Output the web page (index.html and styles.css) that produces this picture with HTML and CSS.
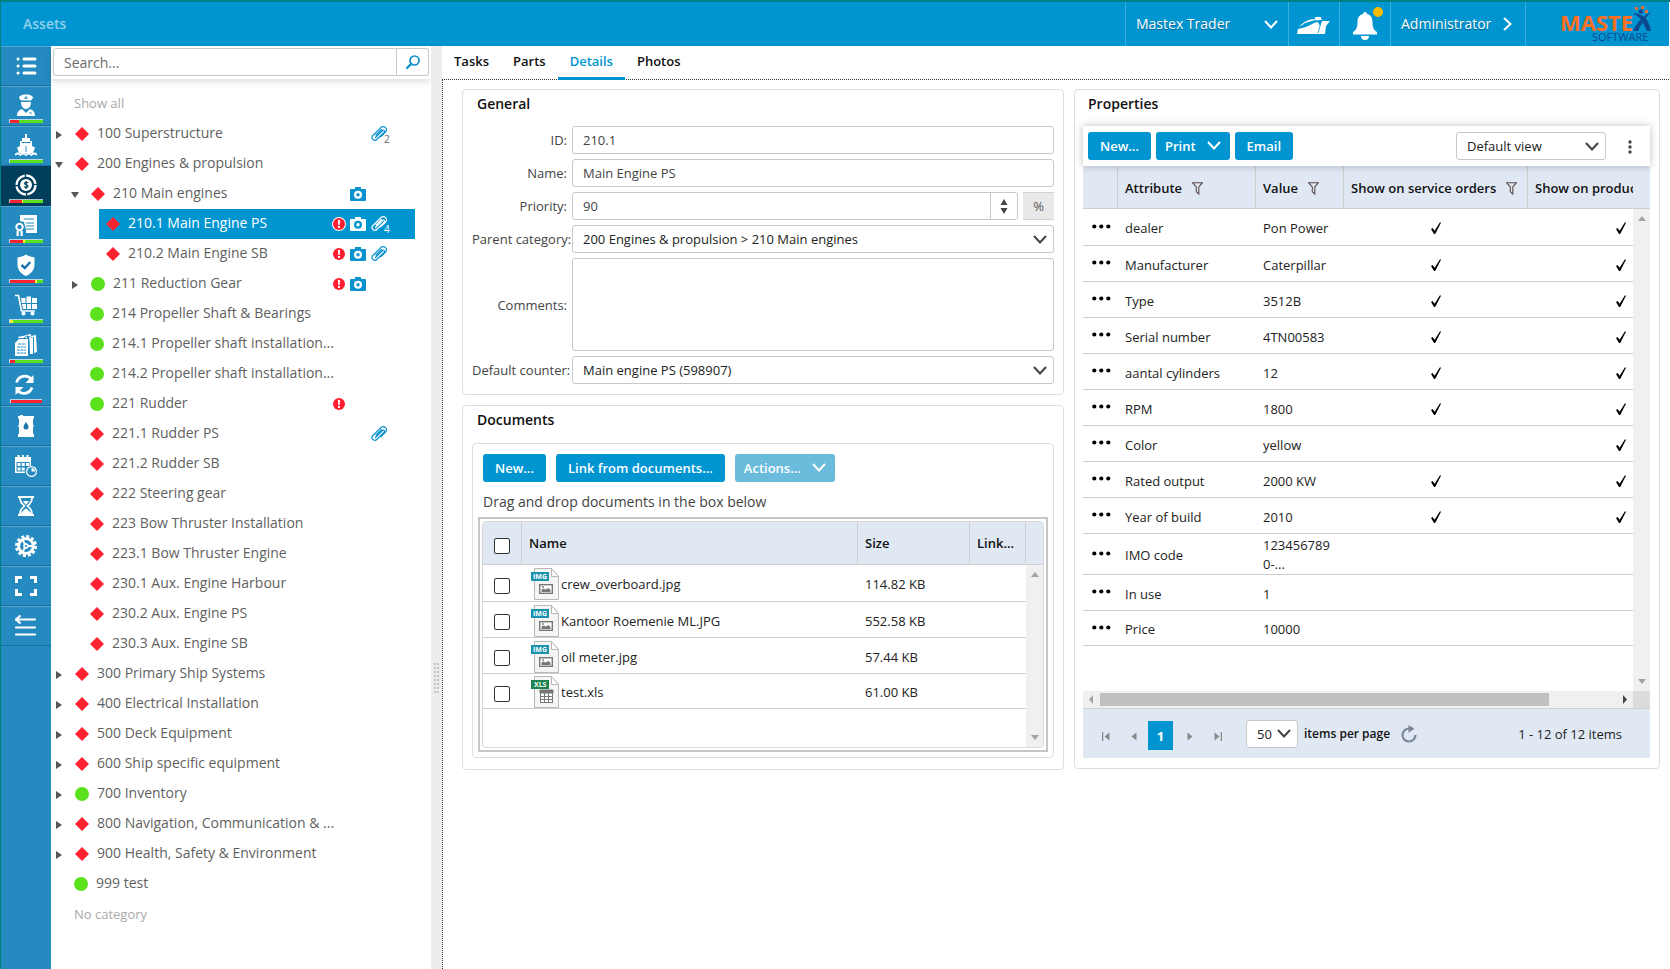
FILE: index.html
```html
<!DOCTYPE html>
<html lang="en">
<head>
<meta charset="utf-8">
<title>Assets</title>
<link rel="stylesheet" href="styles.css">
</head>
<body>
<svg class="defs" width="0" height="0" aria-hidden="true">
  <symbol id="diamond" viewBox="0 0 14 14"><path d="M7 0l7 7-7 7-7-7z" fill="#ff2231"/></symbol>
  <symbol id="dot" viewBox="0 0 14 14"><circle cx="7" cy="7" r="7" fill="#5be11c"/></symbol>
  <symbol id="closed" viewBox="0 0 8 8"><path d="M1 0l6 4-6 4z" fill="currentColor"/></symbol>
  <symbol id="open" viewBox="0 0 8 8"><path d="M0 1h8L4 7z" fill="currentColor"/></symbol>
  <symbol id="alert" viewBox="0 0 14 14"><circle cx="7" cy="7" r="6" fill="#ff1f32"/><path d="M5.900 3h2.200l-.4 5H6.300zM6 9h2v2H6z" fill="#fff"/></symbol>
  <symbol id="camera" viewBox="0 0 16 14"><path fill-rule="evenodd" d="M5 0h6v2h4a1 1 0 0 1 1 1v10a1 1 0 0 1-1 1H1a1 1 0 0 1-1-1V3a1 1 0 0 1 1-1h4zM8 3.700a4 4 0 1 0 0 8 4 4 0 0 0 0-8zm0 2.300a1.700 1.700 0 1 1 0 3.400A1.700 1.700 0 0 1 8 6z" fill="currentColor"/></symbol>
  <symbol id="clip" viewBox="0 0 16 16"><path d="M4.500 11.500l7-7a1.200 1.200 0 0 1 1.700 1.700L5.800 13.500a2.700 2.700 0 0 1-4-.2 2.700 2.700 0 0 1 .1-3.800L9.800 1.600a3.200 3.200 0 0 1 4.700.1 3.200 3.200 0 0 1 0 4.500L10 10.700M5 9l5.500-5.500" fill="none" stroke="currentColor" stroke-width="1.200" stroke-linecap="round"/></symbol>
  <symbol id="chev" viewBox="0 0 14 9"><path d="M1 1l6 6.500L13 1" fill="none" stroke="currentColor" stroke-width="2"/></symbol>
  <symbol id="filter" viewBox="0 0 11 13"><path d="M.5.700h10L6.800 5v7L4.300 9.800V5z" fill="none" stroke="#5b4a4a" stroke-width="1.100"/></symbol>
  <symbol id="more" viewBox="0 0 19 5"><g fill="#000"><circle cx="2.300" cy="2.500" r="2.100"/><circle cx="9.300" cy="2.500" r="2.100"/><circle cx="16.300" cy="2.500" r="2.100"/></g></symbol>
  <symbol id="tick" viewBox="0 0 10 12"><path d="M0 7l1.600-1 2 2.800L9 .3l1 .5L4.200 12H3z" fill="#000"/></symbol>
  <symbol id="img" viewBox="0 0 28 32"><path d="M3.500.500h17l7 8v23h-24z" fill="#f5f5f5" stroke="#b8b8b8"/><path d="M20.500.500v8h7z" fill="#fff" stroke="#b8b8b8"/><rect y="4" width="18" height="9" fill="#1b93ae"/><rect x="8.700" y="16.700" width="12.600" height="8.600" fill="#fff" stroke="#777" stroke-width="1.400"/><path d="M10.500 24v-2.500l2-1 2 1 3-1.500 2 2v2z" fill="#777"/><circle cx="12" cy="19" r=".9" fill="#777"/></symbol>
  <symbol id="xls" viewBox="0 0 28 32"><path d="M3.500.500h17l7 8v23h-24z" fill="#f5f5f5" stroke="#b8b8b8"/><path d="M20.500.500v8h7z" fill="#fff" stroke="#b8b8b8"/><rect y="4" width="18" height="9" fill="#1f8350"/><rect x="9.500" y="14.500" width="12" height="12" fill="#fff" stroke="#777"/><path d="M9 14h13v3H9zM13.500 16v11M17.500 16v11M9 20.500h13M9 23.500h13" fill="#777" stroke="#777"/></symbol>
</svg>

<div class="app">
<header class="topbar">
  <h1 class="page-title">Assets</h1>
  <button class="top-item vessel" type="button"><span>Mastex Trader</span><svg width="14" height="9"><use href="#chev"/></svg></button>
  <button class="top-item ship" type="button" aria-label="Vessel">
    <svg width="34" height="17" viewBox="0 0 34 17"><path d="M0 17l1-5c6-1 11-3 16-6l4-1 2 4 2-5h8l-4 5-1 8z" fill="#fff"/><path d="M2 10c4-5 10-8 16-8V0h6v2l2 1c-9 0-17 2-24 7z" fill="#fff"/><path d="M7 7l12-4M24.500 3L23 9l-2 7" fill="none" stroke="#0095d0" stroke-width=".8"/></svg>
  </button>
  <button class="top-item bell" type="button" aria-label="Notifications">
    <svg width="24" height="28" viewBox="0 0 24 28"><path d="M12 0a2 2 0 0 1 2 2c4 1 5.500 4 5.500 8 0 5 1 8 4.500 10v2.500H0V20c3.500-2 4.500-5 4.500-10C4.500 6 6 3 10 2a2 2 0 0 1 2-2z" fill="#fff"/><path d="M8 24h8a4 4 0 0 1-8 0z" fill="#fff"/></svg>
    <i class="badge"></i>
  </button>
  <button class="top-item user" type="button"><span>Administrator</span><svg width="9" height="14" viewBox="0 0 9 14"><path d="M1 1l6.500 6L1 13" fill="none" stroke="#fff" stroke-width="2"/></svg></button>
  <a class="top-item brand" href="#" aria-label="Mastex Software">
    <svg width="92" height="38" viewBox="0 0 92 38"><text x="0" y="26" class="brand-a">MASTE</text><text x="32" y="36" class="brand-b">SOFTWARE</text><path d="M73 9c6 1 10 8 14 17h4c-2-9-4-13-10-16-2-1-5-2-8-1z" fill="#0b4a8f"/><path d="M91 7c-7 3-14 10-18 19h5c3-7 7-13 13-19z" fill="#0b4a8f"/><circle cx="81" cy="6.500" r="2.300" fill="#0b4a8f"/><g fill="#ff6f21"><rect x="75" y="2" width="3" height="3" rx="1"/><rect x="81" y="1" width="3" height="3" rx="1"/><rect x="85" y="5" width="3" height="3" rx="1"/></g></svg>
  </a>
</header>

<div class="body">
<nav class="rail" aria-label="Modules">
  <a class="mod plain" href="#" aria-label="List"><svg viewBox="0 0 22 22"><path d="M9 4h11M9 11h11M9 18h11M3 4h.1M3 11h.1M3 18h.1" stroke="#fff" stroke-width="3" stroke-linecap="round"/></svg></a>
  <a class="mod" href="#" aria-label="Crew"><svg viewBox="0 0 22 22"><path d="M4 4c0-2 3-3.500 7-3.500S18 2 18 4l-2 2.500H6z"/><path d="M6 8h10c0 4-2 7-5 7S6 12 6 8z"/><path d="M2 22c0-4 2-6 5-7l4 4 4-4c3 1 5 3 5 7z"/><path d="M10 3h2v1.500h-2zM14 19h3" stroke="#248abf" stroke-width=".9"/></svg><span class="bar"><i class="r" style="width:28%"></i><i class="g" style="width:72%"></i></span></a>
  <a class="mod" href="#" aria-label="Ship"><svg viewBox="0 0 22 22"><path d="M10 0h2v4h3v3h2v5l3 1.500-2 5.500H4L2 13.500 5 12V7h2V4h3z"/><path d="M6.500 8.500h9M11 12v6" stroke="#248abf"/><path d="M0 21q2.700-3 5.500 0 2.700-3 5.500 0 2.700-3 5.500 0 2.700-3 5.500 0" fill="none" stroke="#fff" stroke-width="1.800"/></svg><span class="bar"><i class="g" style="width:100%"></i></span></a>
  <a class="mod current" href="#" aria-label="Assets" aria-current="page"><svg viewBox="0 0 22 22"><circle cx="11" cy="11" r="9.500" fill="none" stroke="#fff" stroke-width="2.400" stroke-dasharray="13.400 1.500"/><circle cx="11" cy="11" r="6"/><path d="M13 9c-.5-1-3.500-1.200-3.500.5 0 1.500 3.500 1 3.500 2.700 0 1.600-3 1.600-4 .3M11.200 7v8" fill="none" stroke="#003e5b" stroke-width="1.200"/></svg><span class="bar"><i class="r" style="width:37%"></i><i class="y" style="width:3%"></i><i class="g" style="width:60%"></i></span></a>
  <a class="mod" href="#" aria-label="Certificates"><svg viewBox="0 0 22 22"><path d="M5 1h17v18H11v-3l-2-8-4-1z"/><path d="M9 5h10M11 9h8M11 12h8M11 15h8" stroke="#248abf" stroke-width="1.100"/><circle cx="4.500" cy="13" r="3.200" fill="#248abf" stroke="#fff" stroke-width="2"/><path d="M1.500 17h2.300v5H1.500zM5.500 17h2.300v5H5.500z"/></svg><span class="bar"><i class="r" style="width:40%"></i><i class="y" style="width:6%"></i><i class="g" style="width:54%"></i></span></a>
  <a class="mod" href="#" aria-label="Safety"><svg viewBox="0 0 22 22"><path d="M11 .5c3 2 5.500 2.500 8.500 3V11c0 5-4 9-8.500 11C6.500 20 2.500 16 2.500 11V3.500c3-.5 5.500-1 8.500-3z"/><path d="M6.500 11l3.300 3 5.500-6" fill="none" stroke="#1c73ad" stroke-width="2.400"/></svg><span class="bar"><i class="r" style="width:77%"></i><i class="y" style="width:6%"></i><i class="g" style="width:17%"></i></span></a>
  <a class="mod" href="#" aria-label="Purchasing"><svg viewBox="0 0 22 22"><path d="M0 1.500h3.500l3 15.500H20" fill="none" stroke="#fff" stroke-width="1.600"/><path d="M6 4h4.500v5H6.800zM11.500 2.500H16V9h-4.500zM17 4h5v5h-5zM7 10h4v5H8zM12 10h4v5h-4zM17 10h5v5h-5z"/><circle cx="8.500" cy="19.500" r="2"/><circle cx="17.500" cy="19.500" r="2"/></svg><span class="bar"><i class="y" style="width:10%"></i><i class="g" style="width:90%"></i></span></a>
  <a class="mod" href="#" aria-label="Documents"><svg viewBox="0 0 22 22"><path d="M3 3l9-2v3H3zM11 1l5-1v2l5-1 1 17-3 1V4zM14 3l4 1v16h-3z"/><path d="M4 5h9v17H0V9z"/><path d="M3 10h8M2 13h9M2 16h9M2 19h9" stroke="#248abf" stroke-dasharray="3 .6"/><path d="M14 5v16M18.500 3v16M9 4l3-2 2 2" fill="none" stroke="#248abf" stroke-width=".9"/></svg><span class="bar"><i class="r" style="width:16%"></i><i class="g" style="width:84%"></i></span></a>
  <a class="mod" href="#" aria-label="Synchronise"><svg viewBox="0 0 22 22"><path d="M1.500 8.500A8.500 8.500 0 0 1 16 5M17 13.500A8.500 8.500 0 0 1 3 17" fill="none" stroke="#fff" stroke-width="2.800"/><path d="M18.500 1v8h-8zM.5 21v-8h8z"/></svg><span class="bar short"><i class="r" style="width:100%"></i></span></a>
  <a class="mod plain" href="#" aria-label="Oil"><svg viewBox="0 0 22 22"><path d="M3 1h2V0h3v1h11v2.500h-1V10h.7v2H18v7h1v3H3v-3h1v-7h-.7v-2H4V3.500H3z"/><path d="M11 7c2 3 2.500 4 2.500 5a2.500 2.500 0 0 1-5 0c0-1 .5-2 2.500-5z" fill="#1c73ad"/></svg></a>
  <a class="mod plain" href="#" aria-label="Planning"><svg viewBox="0 0 22 22"><path fill-rule="evenodd" d="M0 2h16v9h-1.500V7h-13v9.500H10V18H0z"/><path d="M2.500 0h2v4h-2zM7 0h2v4H7zM11.500 0h2v4h-2zM2.500 8h3v3h-3zM6.700 8h3v3h-3zM11 8h3v3h-3zM2.500 12.500h3v3h-3zM6.700 12.500h3v3h-3z"/><circle cx="16.500" cy="16.500" r="4.900" fill="#248abf" stroke="#fff" stroke-width="1.200"/><path d="M16.500 13v3.500H20A3.500 3.500 0 0 0 16.500 13z"/></svg></a>
  <a class="mod plain" href="#" aria-label="Hours"><svg viewBox="0 0 22 22"><path d="M3 1h16v2H3zM3 19h16v2H3z"/><path d="M5 3c0 5 2 5.500 4.500 8C7 13.500 5 14 5 19M17 3c0 5-2 5.500-4.500 8 2.500 2.500 4.500 3 4.500 8" fill="none" stroke="#fff" stroke-width="1.700"/><path d="M8 6h6l-3 4zM6 19c0-3 3-3 5-6 2 3 5 3 5 6z"/></svg></a>
  <a class="mod plain" href="#" aria-label="Settings"><svg viewBox="0 0 22 22"><circle cx="11" cy="11" r="9.500" fill="none" stroke="#fff" stroke-width="3" stroke-dasharray="3 1.970"/><circle cx="11" cy="11" r="7.300" fill="none" stroke="#fff" stroke-width="2.800"/><path d="M11 11h7M11 11L7.500 5M11 11l-3.500 6" stroke="#fff" stroke-width="2"/><circle cx="11" cy="11" r="2.800"/><circle cx="11" cy="11" r="1.100" fill="#248abf"/></svg></a>
  <a class="mod plain" href="#" aria-label="Full screen"><svg viewBox="0 0 22 22"><path d="M1.500 8V2.500H7M15 2.500h5.500V8M20.500 14v5.500H15M7 19.500H1.500V14" fill="none" stroke="#fff" stroke-width="3"/></svg></a>
  <a class="mod plain" href="#" aria-label="Collapse"><svg viewBox="0 0 22 22"><path d="M1 4.500h19M1 12.500h19M1 19.500h19" stroke="#fff" stroke-width="2.200" stroke-linecap="round"/><path d="M5.500.5L1 4.500l4.500 4" fill="none" stroke="#fff" stroke-width="2.200"/></svg></a>
</nav>

<aside class="tree-pane">
  <form class="search" role="search">
    <input type="text" placeholder="Search..." aria-label="Search">
    <button type="button" aria-label="Find"><svg width="14" height="14" viewBox="0 0 14 14"><circle cx="8.500" cy="5.500" r="4.500" fill="none" stroke="#0a8fcd" stroke-width="1.700"/><path d="M5.300 8.700L1 13" stroke="#0a8fcd" stroke-width="2.200" stroke-linecap="round"/></svg></button>
  </form>
  <div class="tree">
    <a class="hint" href="#">Show all</a>
    <ul>
      <li class="node"><svg class="tw"><use href="#closed"/></svg><svg class="mk"><use href="#diamond"/></svg><span class="nm">100 Superstructure</span><span class="flags"><b class="cl"><svg width="16" height="16"><use href="#clip"/></svg><sub>2</sub></b></span></li>
      <li class="node"><svg class="tw"><use href="#open"/></svg><svg class="mk"><use href="#diamond"/></svg><span class="nm">200 Engines &amp; propulsion</span></li>
      <li class="node l2"><svg class="tw"><use href="#open"/></svg><svg class="mk"><use href="#diamond"/></svg><span class="nm">210 Main engines</span><span class="flags"><b class="cm"><svg width="16" height="14"><use href="#camera"/></svg></b></span></li>
      <li class="node l3 selected"><svg class="mk"><use href="#diamond"/></svg><span class="nm">210.1 Main Engine PS</span><span class="flags"><b class="al ring"><svg width="14" height="14"><use href="#alert"/></svg></b><b class="cm"><svg width="16" height="14"><use href="#camera"/></svg></b><b class="cl"><svg width="16" height="16"><use href="#clip"/></svg><sub>4</sub></b></span></li>
      <li class="node l3"><svg class="mk"><use href="#diamond"/></svg><span class="nm">210.2 Main Engine SB</span><span class="flags"><b class="al"><svg width="14" height="14"><use href="#alert"/></svg></b><b class="cm"><svg width="16" height="14"><use href="#camera"/></svg></b><b class="cl"><svg width="16" height="16"><use href="#clip"/></svg></b></span></li>
      <li class="node l2"><svg class="tw"><use href="#closed"/></svg><svg class="mk"><use href="#dot"/></svg><span class="nm">211 Reduction Gear</span><span class="flags"><b class="al"><svg width="14" height="14"><use href="#alert"/></svg></b><b class="cm"><svg width="16" height="14"><use href="#camera"/></svg></b></span></li>
      <li class="node leaf"><svg class="mk"><use href="#dot"/></svg><span class="nm">214 Propeller Shaft &amp; Bearings</span></li>
      <li class="node leaf"><svg class="mk"><use href="#dot"/></svg><span class="nm">214.1 Propeller shaft installation...</span></li>
      <li class="node leaf"><svg class="mk"><use href="#dot"/></svg><span class="nm">214.2 Propeller shaft installation...</span></li>
      <li class="node leaf"><svg class="mk"><use href="#dot"/></svg><span class="nm">221 Rudder</span><span class="flags"><b class="al"><svg width="14" height="14"><use href="#alert"/></svg></b></span></li>
      <li class="node leaf"><svg class="mk"><use href="#diamond"/></svg><span class="nm">221.1 Rudder PS</span><span class="flags"><b class="cl"><svg width="16" height="16"><use href="#clip"/></svg></b></span></li>
      <li class="node leaf"><svg class="mk"><use href="#diamond"/></svg><span class="nm">221.2 Rudder SB</span></li>
      <li class="node leaf"><svg class="mk"><use href="#diamond"/></svg><span class="nm">222 Steering gear</span></li>
      <li class="node leaf"><svg class="mk"><use href="#diamond"/></svg><span class="nm">223 Bow Thruster Installation</span></li>
      <li class="node leaf"><svg class="mk"><use href="#diamond"/></svg><span class="nm">223.1 Bow Thruster Engine</span></li>
      <li class="node leaf"><svg class="mk"><use href="#diamond"/></svg><span class="nm">230.1 Aux. Engine Harbour</span></li>
      <li class="node leaf"><svg class="mk"><use href="#diamond"/></svg><span class="nm">230.2 Aux. Engine PS</span></li>
      <li class="node leaf"><svg class="mk"><use href="#diamond"/></svg><span class="nm">230.3 Aux. Engine SB</span></li>
      <li class="node"><svg class="tw"><use href="#closed"/></svg><svg class="mk"><use href="#diamond"/></svg><span class="nm">300 Primary Ship Systems</span></li>
      <li class="node"><svg class="tw"><use href="#closed"/></svg><svg class="mk"><use href="#diamond"/></svg><span class="nm">400 Electrical Installation</span></li>
      <li class="node"><svg class="tw"><use href="#closed"/></svg><svg class="mk"><use href="#diamond"/></svg><span class="nm">500 Deck Equipment</span></li>
      <li class="node"><svg class="tw"><use href="#closed"/></svg><svg class="mk"><use href="#diamond"/></svg><span class="nm">600 Ship specific equipment</span></li>
      <li class="node"><svg class="tw"><use href="#closed"/></svg><svg class="mk"><use href="#dot"/></svg><span class="nm">700 Inventory</span></li>
      <li class="node"><svg class="tw"><use href="#closed"/></svg><svg class="mk"><use href="#diamond"/></svg><span class="nm">800 Navigation, Communication &amp; ...</span></li>
      <li class="node"><svg class="tw"><use href="#closed"/></svg><svg class="mk"><use href="#diamond"/></svg><span class="nm">900 Health, Safety &amp; Environment</span></li>
      <li class="node root-leaf"><svg class="mk"><use href="#dot"/></svg><span class="nm">999 test</span></li>
    </ul>
    <a class="hint" href="#">No category</a>
  </div>
</aside>

<div class="splitter"><i class="grip"></i></div>

<main class="content">
  <nav class="tabs"><a href="#">Tasks</a><a href="#">Parts</a><a class="active" href="#" aria-current="page">Details</a><a href="#">Photos</a></nav>
  <div class="panels">
    <div class="column">
      <section class="card">
        <h2>General</h2>
        <form class="form">
          <label for="f-id">ID:</label><input id="f-id" class="field" type="text" value="210.1">
          <label for="f-name">Name:</label><input id="f-name" class="field" type="text" value="Main Engine PS">
          <label for="f-prio">Priority:</label>
          <div class="prio"><div class="spin"><input id="f-prio" type="number" value="90"><div class="steps"><button type="button" aria-label="Increase"><svg width="8" height="6" viewBox="0 0 8 6"><path d="M4 0l3.500 6h-7z" fill="#444"/></svg></button><button type="button" aria-label="Decrease"><svg width="8" height="6" viewBox="0 0 8 6"><path d="M4 6L.5 0h7z" fill="#444"/></svg></button></div></div><span class="unit">%</span></div>
          <label for="f-parent">Parent category:</label>
          <div class="pick"><select id="f-parent"><option>200 Engines &amp; propulsion &gt; 210 Main engines</option></select><svg width="14" height="9"><use href="#chev"/></svg></div>
          <label for="f-comments">Comments:</label><textarea id="f-comments" class="field area"></textarea>
          <label for="f-counter">Default counter:</label>
          <div class="pick"><select id="f-counter"><option>Main engine PS (598907)</option></select><svg width="14" height="9"><use href="#chev"/></svg></div>
        </form>
      </section>
      <section class="card">
        <h2>Documents</h2>
        <div class="docs">
          <div class="actions"><button class="btn" type="button">New...</button><button class="btn" type="button">Link from documents...</button><button class="btn drop" type="button" disabled>Actions...<svg width="14" height="9"><use href="#chev"/></svg></button></div>
          <p class="note">Drag and drop documents in the box below</p>
          <div class="dropzone">
            <div class="grid">
              <div class="clip">
              <table class="doc-table">
                <colgroup><col class="d-sel"><col><col class="d-size"><col class="d-link"></colgroup>
                <thead><tr><th><input type="checkbox" aria-label="Select all"></th><th>Name</th><th>Size</th><th>Link...</th></tr></thead>
                <tbody>
                  <tr class="first"><td><input type="checkbox" aria-label="Select crew_overboard.jpg"></td><td><span class="file"><svg width="28" height="32"><use href="#img"/><text x="2" y="11" class="tag">IMG</text></svg>crew_overboard.jpg</span></td><td>114.82 KB</td><td></td></tr>
                  <tr><td><input type="checkbox" aria-label="Select Kantoor Roemenie ML.JPG"></td><td><span class="file"><svg width="28" height="32"><use href="#img"/><text x="2" y="11" class="tag">IMG</text></svg>Kantoor Roemenie ML.JPG</span></td><td>552.58 KB</td><td></td></tr>
                  <tr><td><input type="checkbox" aria-label="Select oil meter.jpg"></td><td><span class="file"><svg width="28" height="32"><use href="#img"/><text x="2" y="11" class="tag">IMG</text></svg>oil meter.jpg</span></td><td>57.44 KB</td><td></td></tr>
                  <tr class="last"><td><input type="checkbox" aria-label="Select test.xls"></td><td><span class="file"><svg width="28" height="32"><use href="#xls"/><text x="3" y="11" class="tag">XLS</text></svg>test.xls</span></td><td>61.00 KB</td><td></td></tr>
                </tbody>
              </table>
              </div>
              <div class="vbar"><i class="cap"></i><span class="track"><svg width="8" height="5" viewBox="0 0 8 5"><path d="M4 0l4 5H0z"/></svg><svg width="8" height="5" viewBox="0 0 8 5"><path d="M0 0h8L4 5z"/></svg></span></div>
            </div>
          </div>
        </div>
      </section>
    </div>

    <section class="card props">
      <h2>Properties</h2>
      <div class="prop-grid">
        <div class="toolbar">
          <button class="btn" type="button">New...</button><button class="btn drop" type="button">Print<svg width="14" height="9"><use href="#chev"/></svg></button><button class="btn" type="button">Email</button>
          <div class="pick view"><select aria-label="View"><option>Default view</option></select><svg width="14" height="9"><use href="#chev"/></svg></div>
          <button class="kebab" type="button" aria-label="More"><svg width="4" height="14" viewBox="0 0 4 14"><g fill="#444"><circle cx="2" cy="2" r="1.700"/><circle cx="2" cy="7" r="1.700"/><circle cx="2" cy="12" r="1.700"/></g></svg></button>
        </div>
        <div class="grid">
          <div class="clip">
          <table class="prop-table">
            <colgroup><col class="p-menu"><col class="p-attr"><col class="p-val"><col class="p-so"><col></colgroup>
            <thead><tr><th></th><th>Attribute<svg width="11" height="13"><use href="#filter"/></svg></th><th>Value<svg width="11" height="13"><use href="#filter"/></svg></th><th>Show on service orders<svg width="11" height="13"><use href="#filter"/></svg></th><th>Show on production</th></tr></thead>
            <tbody>
              <tr class="first"><td><button class="dots" type="button" aria-label="Menu"><svg width="19" height="5"><use href="#more"/></svg></button></td><td>dealer</td><td>Pon Power</td><td><svg width="10" height="12"><use href="#tick"/></svg></td><td><svg width="10" height="12"><use href="#tick"/></svg></td></tr>
              <tr><td><button class="dots" type="button" aria-label="Menu"><svg width="19" height="5"><use href="#more"/></svg></button></td><td>Manufacturer</td><td>Caterpillar</td><td><svg width="10" height="12"><use href="#tick"/></svg></td><td><svg width="10" height="12"><use href="#tick"/></svg></td></tr>
              <tr><td><button class="dots" type="button" aria-label="Menu"><svg width="19" height="5"><use href="#more"/></svg></button></td><td>Type</td><td>3512B</td><td><svg width="10" height="12"><use href="#tick"/></svg></td><td><svg width="10" height="12"><use href="#tick"/></svg></td></tr>
              <tr><td><button class="dots" type="button" aria-label="Menu"><svg width="19" height="5"><use href="#more"/></svg></button></td><td>Serial number</td><td>4TN00583</td><td><svg width="10" height="12"><use href="#tick"/></svg></td><td><svg width="10" height="12"><use href="#tick"/></svg></td></tr>
              <tr><td><button class="dots" type="button" aria-label="Menu"><svg width="19" height="5"><use href="#more"/></svg></button></td><td>aantal cylinders</td><td>12</td><td><svg width="10" height="12"><use href="#tick"/></svg></td><td><svg width="10" height="12"><use href="#tick"/></svg></td></tr>
              <tr><td><button class="dots" type="button" aria-label="Menu"><svg width="19" height="5"><use href="#more"/></svg></button></td><td>RPM</td><td>1800</td><td><svg width="10" height="12"><use href="#tick"/></svg></td><td><svg width="10" height="12"><use href="#tick"/></svg></td></tr>
              <tr><td><button class="dots" type="button" aria-label="Menu"><svg width="19" height="5"><use href="#more"/></svg></button></td><td>Color</td><td>yellow</td><td></td><td><svg width="10" height="12"><use href="#tick"/></svg></td></tr>
              <tr><td><button class="dots" type="button" aria-label="Menu"><svg width="19" height="5"><use href="#more"/></svg></button></td><td>Rated output</td><td>2000 KW</td><td><svg width="10" height="12"><use href="#tick"/></svg></td><td><svg width="10" height="12"><use href="#tick"/></svg></td></tr>
              <tr><td><button class="dots" type="button" aria-label="Menu"><svg width="19" height="5"><use href="#more"/></svg></button></td><td>Year of build</td><td>2010</td><td><svg width="10" height="12"><use href="#tick"/></svg></td><td><svg width="10" height="12"><use href="#tick"/></svg></td></tr>
              <tr class="tall"><td><button class="dots" type="button" aria-label="Menu"><svg width="19" height="5"><use href="#more"/></svg></button></td><td>IMO code</td><td>123456789<br>0-...</td><td></td><td></td></tr>
              <tr><td><button class="dots" type="button" aria-label="Menu"><svg width="19" height="5"><use href="#more"/></svg></button></td><td>In use</td><td>1</td><td></td><td></td></tr>
              <tr class="last"><td><button class="dots" type="button" aria-label="Menu"><svg width="19" height="5"><use href="#more"/></svg></button></td><td>Price</td><td>10000</td><td></td><td></td></tr>
            </tbody>
          </table>
          </div>
          <div class="vbar"><i class="cap"></i><span class="track"><svg width="8" height="5" viewBox="0 0 8 5"><path d="M4 0l4 5H0z"/></svg><svg width="8" height="5" viewBox="0 0 8 5"><path d="M0 0h8L4 5z"/></svg></span></div>
        </div>
        <div class="hbar"><svg width="17" height="9" viewBox="0 0 17 9"><path d="M10 0v9L6 4.500z" fill="#a3a3a3"/></svg><span class="lane"><i class="thumb"></i></span><svg width="17" height="9" viewBox="0 0 17 9"><path d="M7 0v9l4-4.500z" fill="#444"/></svg><i class="corner"></i></div>
        <div class="pager">
          <button class="pg" type="button" aria-label="First"><svg width="8" height="9" viewBox="0 0 8 9"><path d="M0 0h1.300v9H0zM7.500.500v8l-5-4z"/></svg></button>
          <button class="pg" type="button" aria-label="Previous"><svg width="8" height="9" viewBox="0 0 8 9"><path d="M6.500.500v8l-5-4z"/></svg></button>
          <button class="pg now" type="button">1</button>
          <button class="pg" type="button" aria-label="Next"><svg width="8" height="9" viewBox="0 0 8 9"><path d="M1.500.500v8l5-4z"/></svg></button>
          <button class="pg" type="button" aria-label="Last"><svg width="8" height="9" viewBox="0 0 8 9"><path d="M6.700 0H8v9H6.700zM.5.500v8l5-4z"/></svg></button>
          <div class="pick size"><select id="psize"><option>50</option></select><svg width="14" height="9"><use href="#chev"/></svg></div>
          <label for="psize">items per page</label>
          <button class="pg reload" type="button" aria-label="Refresh"><svg width="16" height="18" viewBox="0 0 16 18"><path d="M14.500 10A6.500 6.500 0 1 1 9 3.600" fill="none" stroke="#7c8797" stroke-width="2.200"/><path d="M7.500 0l6 3.800-6 4z"/></svg></button>
          <span class="count">1 - 12 of 12 items</span>
        </div>
      </div>
    </section>
  </div>
</main>
</div>
</div>
</body>
</html>
```
FILE: styles.css
```css
* { box-sizing: border-box; }
body { margin: 0; background: #fff; color: #222; font: 13px/18px "Open Sans", sans-serif; }
button, input, select, textarea { font: inherit; color: inherit; margin: 0; padding: 0; }
button { border: 0; background: none; display: flex; align-items: center; justify-content: center; }
a { color: inherit; text-decoration: none; }
ul, h1, h2, p { margin: 0; padding: 0; list-style: none; }
svg { flex: none; display: block; }
.defs { position: absolute; }

.app { display: flex; flex-direction: column; min-height: 100vh; border-top: 2px solid #008080; border-left: 1px solid #008080; padding-right: 1px; }

/* Top bar */
.topbar { display: flex; height: 44px; background: #0095d0; color: #fff; font-size: 14px; }
.page-title { flex: 1; padding-left: 22px; font-size: 14px; font-weight: 600; line-height: 44px; color: #8fd0ec; }
.top-item { display: flex; align-items: center; border-left: 1px solid #40afdc; color: #fff; text-shadow: 0 1px 1px #00000055; }
.vessel { width: 163px; justify-content: space-between; padding: 0 10px; }
.ship { width: 51px; padding-top: 2px; }
.bell { width: 51px; position: relative; padding-top: 4px; }
.badge { position: absolute; top: 5px; right: 7px; width: 10px; height: 10px; border-radius: 50%; background: #ffb900; }
.user { width: 135px; justify-content: flex-start; gap: 12px; padding: 0 10px; }
.brand { width: 144px; justify-content: flex-end; padding-right: 17px; text-shadow: none; }
.brand-a { font: 700 22px "Open Sans", sans-serif; fill: #ff6f21; }
.brand-b { font: 400 11px "Open Sans", sans-serif; fill: #0b4a8f; }

.body { display: flex; flex: 1; }

/* Module rail */
.rail { width: 50px; background: #248abf; flex: none; }
.mod { display: flex; flex-direction: column; align-items: center; gap: 3px; height: 40px; padding-top: 7px; border-top: 1px solid #55a5d0; border-bottom: 1px solid #1b6f9e; }
.mod.plain { padding-top: 8px; }
.mod > svg { width: 22px; height: 22px; fill: #fff; }
.mod.current { background: #003e5b; border-color: #003e5b; }
.bar { display: flex; width: 34px; height: 4px; border-top: 1px solid #ffffffaa; border-left: 1px solid #ffffffaa; }
.bar.short { width: 32px; }
.bar i { height: 3px; }
.r { background: #ff2231; }
.g { background: #5be11c; }
.y { background: #fff02a; }

/* Tree */
.tree-pane { width: 380px; flex: none; color: #5f5f5f; font-size: 14px; }
.search { display: flex; padding: 2px 2px 3px; height: 33px; box-shadow: 0 3px 6px #0000001f; }
.search input { flex: 1; height: 28px; padding: 0 10px; border: 1px solid #c8c8c8; border-radius: 3px 0 0 3px; outline: 0; }
.search input::placeholder { color: #6b6b6b; }
.search button { width: 32px; height: 28px; border: 1px solid #c8c8c8; border-left: 0; border-radius: 0 3px 3px 0; }
.tree { padding: 10px 16px 0 3px; }
.hint { display: block; padding-left: 20px; font-size: 13px; line-height: 30px; color: #a9a9a9; }
.hint:first-child { line-height: 28px; padding-bottom: 2px; }
.node { display: flex; align-items: center; height: 30px; line-height: 28px; }
.tw { width: 8px; height: 8px; margin: 2px 12px 0 1px; color: #555; }
.mk { width: 14px; height: 14px; margin-right: 8px; }
.nm { flex: 1; white-space: nowrap; padding-bottom: 2px; }
.l2 { padding-left: 16px; }
.leaf { padding-left: 36px; }
.root-leaf { padding-left: 20px; }
.l3 { margin-left: 45px; padding-left: 7px; }
.selected { background: #0095d0; color: #fff; }
.flags { display: grid; grid-template-columns: 16px 20px 20px; align-items: center; width: 83px; color: #0a92cf; }
.selected .flags { color: #fff; }
.al { grid-column: 1; }
.cm { grid-column: 2; padding-left: 2px; }
.cl { grid-column: 3; padding-left: 3px; display: flex; align-items: flex-end; height: 16px; }
.al, .cm, .cl { grid-row: 1; }
.ring svg { border-radius: 50%; background: #fff; }
.cl sub { font-size: 10px; font-weight: 400; line-height: 10px; margin: 0 0 -2px -3px; color: #666; }
.selected .cl sub { color: #fff; }

.splitter { width: 11px; flex: none; background: #ededed; display: flex; align-items: flex-start; justify-content: center; padding-top: 617px; }
.grip { width: 5px; height: 30px; background: repeating-linear-gradient(#ededed00 0 2px, #ededed 2px 4px), repeating-linear-gradient(90deg, #c4c4c4 0 2px, #ededed 2px 3px); }

/* Content */
.content { flex: 1; min-width: 0; display: flex; flex-direction: column; }
.tabs { display: flex; height: 34px; border-bottom: 1px dotted #333; font-size: 13px; font-weight: 600; color: #111; }
.tabs a { padding: 0 12px; height: 34px; line-height: 30px; border-bottom: 3px solid transparent; }
.tabs a.active { color: #0095d0; border-bottom-color: #0095d0; }
.panels { flex: 1; display: grid; grid-template-columns: 602fr 586fr; gap: 10px; align-items: start; padding: 9px 9px 9px 19px; border-left: 1px dotted #333; }
.column { display: flex; flex-direction: column; gap: 10px; min-width: 0; }
.card { border: 1px solid #dedede; border-radius: 4px; padding: 0 9px 10px; min-width: 0; }
.card h2 { padding-left: 5px; font-size: 14px; font-weight: 600; line-height: 28px; color: #111; }

.form { display: grid; grid-template-columns: 95px 1fr; gap: 5px; align-items: center; padding-top: 8px; }
.form label { text-align: right; color: #444; font-weight: 500; white-space: nowrap; }
.field, .spin, .pick select { width: 100%; height: 28px; border: 1px solid #c8c8c8; border-radius: 3px; background: #fff; outline: 0; padding: 0 10px; color: #444; }
.area { display: block; height: 93px; resize: none; }
.pick { display: grid; align-items: center; }
.pick select { grid-area: 1 / 1; appearance: none; color: #222; }
.pick svg { grid-area: 1 / 1; justify-self: end; margin-right: 7px; pointer-events: none; color: #444; }
.prio { display: flex; gap: 5px; }
.spin { flex: 1; display: flex; padding: 0; }
.spin input { flex: 1; min-width: 0; border: 0; outline: 0; padding: 0 10px; background: none; appearance: textfield; }
.spin input::-webkit-inner-spin-button { appearance: none; }
.steps { width: 27px; border-left: 1px solid #c8c8c8; display: flex; flex-direction: column; align-items: center; justify-content: center; gap: 3px; }
.unit { width: 31px; height: 28px; line-height: 26px; background: #e9e9e9; border: 1px solid #d2d2d2; border-right: 0; border-left: 0; text-align: center; color: #555; }

.docs { border: 1px solid #dedede; border-radius: 4px; padding: 10px 5px 5px; margin: 9px 0 1px; }
.actions { display: flex; gap: 10px; padding-left: 5px; }
.btn { height: 28px; padding: 0 12px 1px; border-radius: 3px; background: #0095d0; color: #fff; font-weight: 600; }
.btn.drop { gap: 11px; padding: 0 9px 1px; }
.btn:disabled { background: #6bbbdc; }
.note { padding: 10px 5px 5px; font-size: 14px; line-height: 20px; color: #444; }
.dropzone { border: 2px solid #c6c6c6; padding: 2px; }
.grid { display: flex; }
.doc-table, .prop-table { width: 100%; border-collapse: separate; border-spacing: 0; table-layout: fixed; }
.clip { flex: 1; min-width: 0; overflow: hidden; }
th { height: 43px; padding: 0; background: #e0e8f4; border-right: 1px solid #cfcfcf; border-bottom: 1px solid #cfcfcf; text-align: left; font-weight: 600; color: #111; white-space: nowrap; overflow: hidden; }
td { height: 36px; padding: 0; border-bottom: 1px solid #cfcfcf; }
tr.first td { height: 37px; }
tr.last td { height: 35px; }
.dropzone .grid { border: 1px solid #d8d8d8; border-radius: 4px; height: 227px; overflow: hidden; }
.doc-table th { padding-left: 7px; }
.doc-table td { padding: 2px 0 0 7px; }
.doc-table th:first-child, .doc-table td:first-child { padding: 5px 0 0 11px; }
.d-sel { width: 39px; }
.d-size { width: 112px; }
.d-link { width: 56px; }
input[type="checkbox"] { display: block; appearance: none; width: 16px; height: 16px; border: 1px solid #333; border-radius: 2px; background: #fff; }
.file { display: flex; align-items: center; gap: 2px; padding-left: 2px; height: 32px; }
.tag { font: 700 7px "Open Sans", sans-serif; fill: #fff; }
.vbar { width: 17px; flex: none; display: flex; flex-direction: column; }
.cap { height: 43px; background: #e0e8f4; border-bottom: 1px solid #cfcfcf; }
.track { flex: 1; display: flex; flex-direction: column; justify-content: space-between; align-items: center; padding: 7px 0; background: #f0f0f0; }
.track svg { fill: #a3a3a3; }

/* Properties */
.props { padding: 0 9px 10px 8px; }
.toolbar { position: relative; display: flex; align-items: center; gap: 5px; height: 40px; margin-top: 8px; padding: 0 5px; background: #fff; box-shadow: 0 0 8px #00000040; }
.view { width: 150px; margin-left: auto; }
.kebab { width: 34px; height: 28px; padding: 2px 0 0 3px; }
.prop-table { min-width: 632px; }
.p-menu { width: 35px; }
.p-attr { width: 138px; }
.p-val { width: 88px; }
.p-so { width: 184px; }
.prop-table th { padding: 2px 0 0 7px; }
.prop-table td { padding: 2px 8px 0 7px; }
.prop-table td:first-child { padding-left: 9px; padding-right: 0; }
.prop-table th svg { display: inline-block; margin-left: 10px; vertical-align: -2px; }
.prop-table td > svg { margin: 0 auto; }
.prop-table tr.tall td { height: 41px; line-height: 19px; }
.dots { padding-bottom: 4px; }
.prop-grid .grid { height: 525px; }
.hbar { display: flex; align-items: center; height: 17px; background: #f0f0f0; }
.lane { flex: 1; height: 13px; }
.thumb { display: block; width: 87%; height: 13px; background: #c0c0c0; }
.corner { width: 17px; height: 17px; background: #dcdcdc; }
.pager { display: flex; align-items: center; height: 50px; padding: 0 28px 0 9px; border-top: 1px solid #cfcfcf; background: #e0e8f4; }
.pg { width: 28px; height: 29px; padding-top: 5px; }
.pg svg { fill: #8a8a8a; }
.pg.now { width: 25px; height: 29px; margin: 4px 3px 0 0; padding: 0; background: #0095d0; color: #fff; font-weight: 700; }
.size { width: 52px; margin: 0 6px 0 14px; }
.pager label { font-weight: 600; font-size: 12px; color: #111; }
.reload { width: 16px; margin-left: 11px; padding: 0; }
.reload svg { fill: #7c8797; }
.count { margin-left: auto; }
```
